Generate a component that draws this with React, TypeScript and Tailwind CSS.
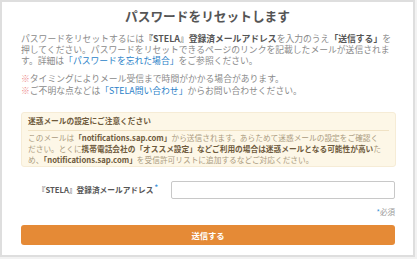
export default function App() {
  return (
    <div
      className="w-[417px] h-[259px] bg-[#f2f2f2]"
      style={{ fontFamily: '"Noto Sans CJK JP", "Noto Sans", sans-serif' }}
    >
      <div className="w-[415px] h-[257px] border-2 border-[#dedede] bg-white pt-[6px] pl-[19px]">
        <h1 className="text-center text-[12.7px] leading-[16px] font-bold text-[#555] pr-[19px]">
          パスワードをリセットします
        </h1>

        <div className="w-[375px] mt-[9px] text-[8.8px] text-[#8a8a8a]">
          <p className="leading-[11.2px]">
            パスワードをリセットするには
            <b className="text-[#555]">『STELA』登録済メールアドレス</b>
            を入力のうえ<b className="text-[#555]">「送信する」</b>
            を押してください。パスワードをリセットできるページのリンクを記載したメールが送信されます。詳細は
            <span className="text-[#2a7fc8]">「パスワードを忘れた場合」</span>
            をご参照ください。
          </p>

          <div className="mt-[6px] leading-[12px]">
            <p>
              <span className="text-[#ec8a8a]">※</span>
              タイミングによりメール受信まで時間がかかる場合があります。
            </p>
            <p>
              <span className="text-[#ec8a8a]">※</span>
              ご不明な点などは
              <span className="text-[#2a7fc8]">「STELA問い合わせ」</span>
              からお問い合わせください。
            </p>
          </div>

          <div className="mt-[15px] rounded-[3px] border border-[#f6ecd6] bg-[#fdf7e7] px-[6px] pt-[3px] pb-[1px] text-[7.7px]">
            <p className="leading-[10px] pb-[4px] border-b border-[#f0e2c4] font-bold text-[#6e5a3c]">
              迷惑メールの設定にご注意ください
            </p>
            <div className="leading-[11.2px] pt-[1px] text-[#ab9b80]">
              <p className="whitespace-nowrap">
                このメールは
                <b className="text-[#6e5a3c]">「notifications.sap.com」</b>
                から送信されます。あらためて迷惑メールの設定をご確認く
              </p>
              <p className="whitespace-nowrap">
                ださい。とくに
                <b className="text-[#6e5a3c]">
                  携帯電話会社の「オススメ設定」などご利用の場合は迷惑メールとなる可能性が高い
                </b>
                た
              </p>
              <p className="whitespace-nowrap">
                め、<b className="text-[#6e5a3c]">「notifications.sap.com」</b>
                を受信許可リストに追加するなどご対応ください。
              </p>
            </div>
          </div>

          <div className="mt-[14px] flex items-center">
            <label className="w-[150px] pr-[13px] text-right text-[7.7px] font-bold text-[#555] whitespace-nowrap">
              『STELA』登録済メールアドレス
              <sup className="text-[#3a8fd8] text-[7px] ml-[1px]">*</sup>
            </label>
            <input
              type="text"
              className="h-[18px] w-[224px] rounded-[2px] border border-[#c8c8c8] bg-white outline-none"
            />
          </div>

          <p className="mt-[8px] text-right text-[7.5px] leading-[10px] text-[#999] pr-[1px]">
            <span className="text-[#3a8fd8]">*</span>必須
          </p>

          <button
            type="button"
            className="mt-[8px] flex h-[20px] w-[374px] items-center justify-center rounded-[3px] bg-[#e58a36] text-[8.3px] font-bold text-white"
          >
            送信する
          </button>
        </div>
      </div>
    </div>
  );
}
